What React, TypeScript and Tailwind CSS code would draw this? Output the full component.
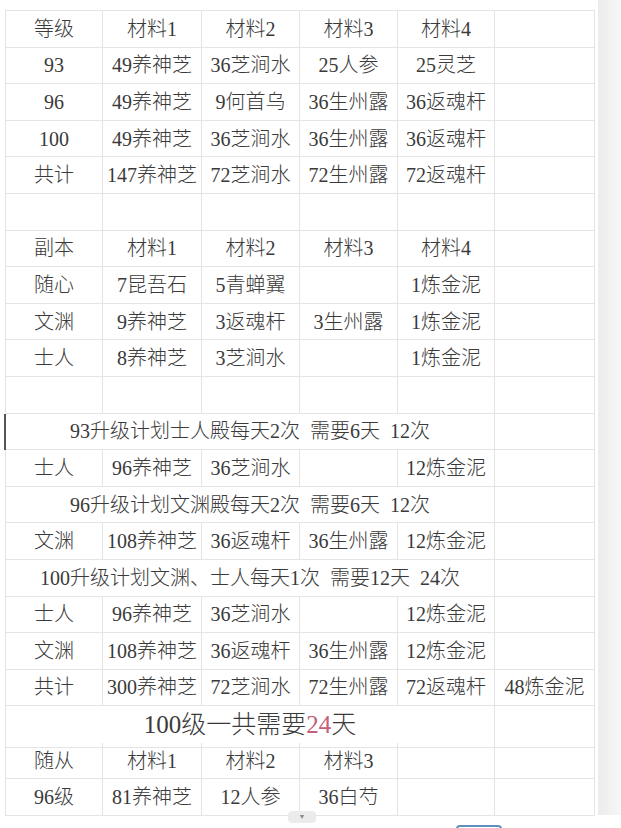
import React from "react"

type Row =
  | { kind: "cells"; cells: string[] }
  | { kind: "merged"; text: React.ReactNode; big?: boolean; mark?: boolean }

const rows: Row[] = [
  { kind: "cells", cells: ["等级", "材料1", "材料2", "材料3", "材料4", ""] },
  { kind: "cells", cells: ["93", "49养神芝", "36芝涧水", "25人参", "25灵芝", ""] },
  { kind: "cells", cells: ["96", "49养神芝", "9何首乌", "36生州露", "36返魂杆", ""] },
  { kind: "cells", cells: ["100", "49养神芝", "36芝涧水", "36生州露", "36返魂杆", ""] },
  { kind: "cells", cells: ["共计", "147养神芝", "72芝涧水", "72生州露", "72返魂杆", ""] },
  { kind: "cells", cells: ["", "", "", "", "", ""] },
  { kind: "cells", cells: ["副本", "材料1", "材料2", "材料3", "材料4", ""] },
  { kind: "cells", cells: ["随心", "7昆吾石", "5青蝉翼", "", "1炼金泥", ""] },
  { kind: "cells", cells: ["文渊", "9养神芝", "3返魂杆", "3生州露", "1炼金泥", ""] },
  { kind: "cells", cells: ["士人", "8养神芝", "3芝涧水", "", "1炼金泥", ""] },
  { kind: "cells", cells: ["", "", "", "", "", ""] },
  { kind: "merged", text: "93升级计划士人殿每天2次\u00a0 需要6天\u00a0 12次", mark: true },
  { kind: "cells", cells: ["士人", "96养神芝", "36芝涧水", "", "12炼金泥", ""] },
  { kind: "merged", text: "96升级计划文渊殿每天2次\u00a0 需要6天\u00a0 12次" },
  { kind: "cells", cells: ["文渊", "108养神芝", "36返魂杆", "36生州露", "12炼金泥", ""] },
  { kind: "merged", text: "100升级计划文渊、士人每天1次\u00a0 需要12天\u00a0 24次" },
  { kind: "cells", cells: ["士人", "96养神芝", "36芝涧水", "", "12炼金泥", ""] },
  { kind: "cells", cells: ["文渊", "108养神芝", "36返魂杆", "36生州露", "12炼金泥", ""] },
  { kind: "cells", cells: ["共计", "300养神芝", "72芝涧水", "72生州露", "72返魂杆", "48炼金泥"] },
  {
    kind: "merged",
    big: true,
    text: (
      <>
        100级一共需要<span className="text-[#c4607a]">24</span>天
      </>
    ),
  },
  { kind: "cells", cells: ["随从", "材料1", "材料2", "材料3", "", ""] },
  { kind: "cells", cells: ["96级", "81养神芝", "12人参", "36白芍", "", ""] },
]

const grid = "grid grid-cols-[97px_99px_98px_98px_97px_100px] h-[36.6px]"
const cell = "flex items-center justify-center border-r border-b border-[#e4e4e4] whitespace-nowrap"

export default function App() {
  return (
    <div
      className="relative w-[621px] h-[828px] overflow-hidden bg-white text-[#3a3a3a]"
      style={{ fontFamily: '"Liberation Serif", "Noto Sans CJK SC", serif' }}
    >
      <div className="flex">
        <div className="pl-[5px] pt-[10px] w-[598px]">
          <div className="border-l border-t border-[#e4e4e4] w-[590px]">
            {rows.map((row, i) =>
              row.kind === "cells" ? (
                <div key={i} className={grid}>
                  {row.cells.map((c, j) => (
                    <div key={j} className={`${cell} text-[20px] font-light`}>
                      {c}
                    </div>
                  ))}
                </div>
              ) : (
                <div key={i} className={`${grid} relative`}>
                  <div
                    className={`${cell} col-span-5 font-light ${
                      row.big ? "text-[25px] pb-[3px]" : "text-[20px]"
                    }`}
                  >
                    {row.text}
                  </div>
                  <div className={cell}></div>
                  {row.mark && <div className="absolute left-[-2px] top-0 h-full w-[2px] bg-[#555]" />}
                </div>
              )
            )}
          </div>
        </div>
        <div className="flex-1 h-[815px] bg-gradient-to-r from-[#ececec] to-[#f7f7f7]" />
      </div>
      <div className="absolute left-[288px] top-[811px] w-[28px] h-[12px] rounded-sm bg-[#ebebeb] flex items-center justify-center text-[7px] text-[#888]">
        ▼
      </div>
      <div className="absolute left-[456px] top-[825px] w-[46px] h-[10px] rounded-[4px] border-2 border-[#5d8fbf]" />
    </div>
  )
}
